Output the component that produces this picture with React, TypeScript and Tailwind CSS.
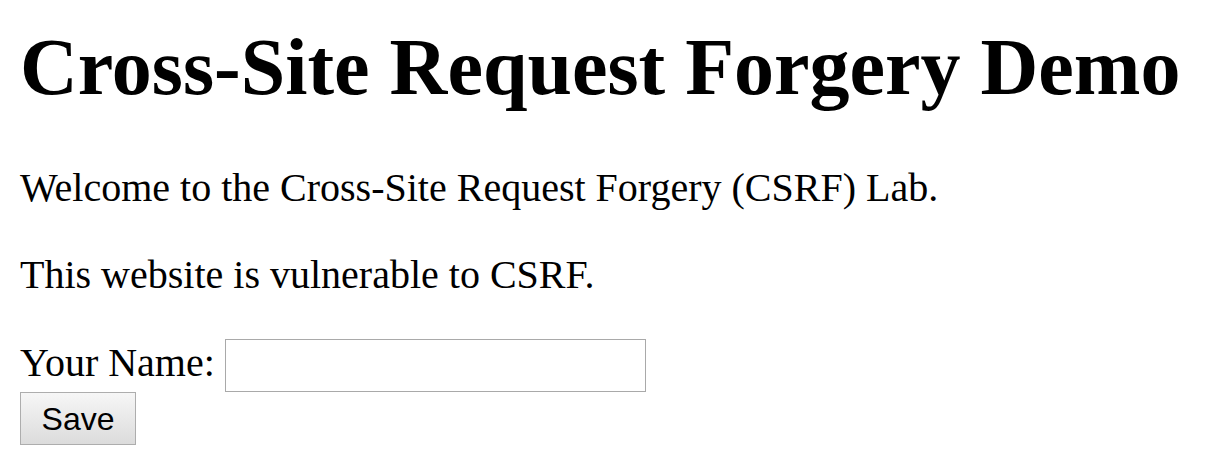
export default function App() {
  return (
    <div className="min-h-[476px] bg-white pl-[20px] pt-[21px] text-black" style={{ fontFamily: '"Liberation Serif", "Times New Roman", serif' }}>
      <h1 className="m-0 text-[80px] font-bold leading-[92px] whitespace-nowrap">Cross-Site Request Forgery Demo</h1>
      <p className="mt-[52px] text-[40px] leading-[46px]">Welcome to the Cross-Site Request Forgery (CSRF) Lab.</p>
      <p className="mt-[41px] text-[40px] leading-[46px]">This website is vulnerable to CSRF.</p>
      <div className="mt-[41px] flex items-start">
        <span className="mt-[1px] text-[40px] leading-[46px] whitespace-nowrap">Your Name:</span>
        <input
          type="text"
          className="ml-[10px] h-[53px] w-[421px] border border-[#a9a9a9] bg-white px-[5px] text-[33px] outline-none"
          style={{ fontFamily: '"Liberation Sans", Arial, sans-serif' }}
        />
      </div>
      <button
        type="button"
        className="flex h-[53px] w-[116px] items-center justify-center border border-[#adadad] bg-gradient-to-b from-[#f6f6f6] to-[#dcdcdc] pt-[1px] text-[32px] leading-none text-black"
        style={{ fontFamily: '"Liberation Sans", Arial, sans-serif' }}
      >
        Save
      </button>
    </div>
  );
}
